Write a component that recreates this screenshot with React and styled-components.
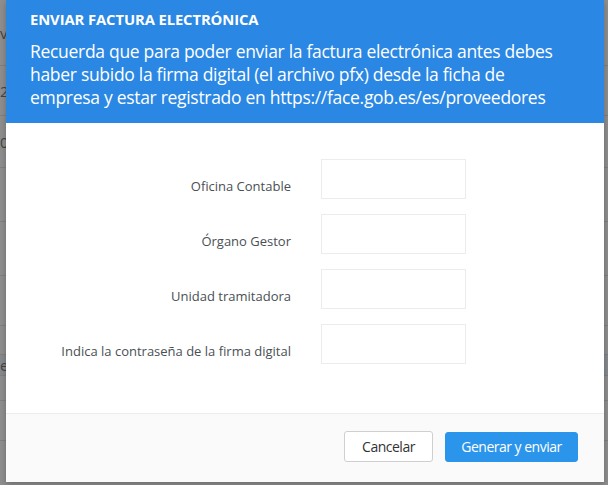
import React from 'react';
import styled, { createGlobalStyle } from 'styled-components';

const GlobalStyle = createGlobalStyle`
    html, body {
        margin: 0;
        padding: 0;
        background: #8e8e8e;
        font-family: "Open Sans", "Liberation Sans", sans-serif;
    }
`;

const Screen = styled.div`
    position: relative;
    width: 608px;
    height: 485px;
    overflow: hidden;
    background: #8e8e8e;
`;

const BackTable = styled.div`
    display: flex;
    flex-direction: column;
`;
const BackRow = styled.div`
    height: ${p => p.h}px;
    border-bottom: 1px solid #7f7f7f;
    background: ${p => p.tint || 'transparent'};
    color: #444;
    font-size: 15px;
    line-height: ${p => p.h}px;
    display: flex;
    justify-content: space-between;
    padding-right: 2px;
    box-sizing: border-box;
`;

const Modal = styled.div`
    position: absolute;
    left: 6px;
    top: 0;
    width: 598px;
    height: 482px;
    background: #fff;
    display: flex;
    flex-direction: column;
    box-shadow: 0 2px 6px rgba(0, 0, 0, 0.25);
`;

const Header = styled.div`
    background: #2a87e4;
    color: #fff;
    padding: 9px 24px 14px 24px;
    height: 123px;
    box-sizing: border-box;
`;
const Title = styled.h4`
    margin: 0 0 11px 0;
    font-size: 14.8px;
    font-weight: 700;
    line-height: 20px;
    letter-spacing: -0.1px;
`;
const Notice = styled.p`
    margin: 0;
    font-size: 17.5px;
    line-height: 23px;
    font-weight: 400;
    letter-spacing: -0.3px;
`;

const Body = styled.div`
    flex: 1;
    padding: 36px 0 0 24px;
    display: grid;
    grid-template-columns: 261px 145px;
    grid-auto-rows: 40px;
    column-gap: 30px;
    row-gap: 15px;
    align-content: start;
`;
const Label = styled.label`
    align-self: end;
    padding-bottom: 4px;
    text-align: right;
    font-size: 13px;
    color: #4a4f55;
    line-height: 18px;
`;
const Input = styled.input`
    box-sizing: border-box;
    width: 145px;
    height: 40px;
    border: 1px solid #ececec;
    outline: none;
    font: inherit;
`;

const Footer = styled.div`
    height: 69px;
    box-sizing: border-box;
    background: #fafafa;
    border-top: 1px solid #ececec;
    display: flex;
    justify-content: flex-end;
    align-items: center;
    gap: 12px;
    padding: 0 26px 3px 0;
`;
const Button = styled.button`
    font-family: "Open Sans", "Liberation Sans", sans-serif;
    font-size: 14px;
    letter-spacing: -0.5px;
    width: ${p => p.primary ? 133 : 89}px;
    height: ${p => p.primary ? 30 : 31}px;
    padding: 0;
    border-radius: 3px;
    border: 1px solid ${p => p.primary ? '#2b95ec' : '#cfcfcf'};
    background: ${p => p.primary ? '#2b95ec' : '#fff'};
    color: ${p => p.primary ? '#fff' : '#333'};
    cursor: pointer;
`;

const fields = [
    'Oficina Contable',
    'Órgano Gestor',
    'Unidad tramitadora',
    'Indica la contraseña de la firma digital',
];

const rows = [
    { h: 66, l: 'v', r: '' },
    { h: 50, l: '2', r: '' },
    { h: 52, l: '0', r: '' },
    { h: 54, l: '', r: '' },
    { h: 54, l: '', r: '' },
    { h: 50, l: '', r: '' },
    { h: 29, l: '', r: '' },
    { h: 21, l: 'e', r: '', tint: '#86898d' },
    { h: 25, l: '', r: '' },
    { h: 40, l: '', r: '' },
];

export default function App() {
    return (
        <>
            <GlobalStyle />
            <Screen>
                <BackTable>
                    {rows.map((r, i) => (
                        <BackRow key={i} h={r.h} tint={r.tint}>
                            <span>{r.l}</span>
                            <span>{r.r}</span>
                        </BackRow>
                    ))}
                </BackTable>
                <Modal>
                    <Header>
                        <Title>ENVIAR FACTURA ELECTRÓNICA</Title>
                        <Notice>
                            Recuerda que para poder enviar la factura electrónica antes debes<br />
                            haber subido la firma digital (el archivo pfx) desde la ficha de<br />
                            empresa y estar registrado en https://face.gob.es/es/proveedores
                        </Notice>
                    </Header>
                    <Body>
                        {fields.map(f => (
                            <React.Fragment key={f}>
                                <Label>{f}</Label>
                                <Input type={f.startsWith('Indica') ? 'password' : 'text'} />
                            </React.Fragment>
                        ))}
                    </Body>
                    <Footer>
                        <Button>Cancelar</Button>
                        <Button primary>Generar y enviar</Button>
                    </Footer>
                </Modal>
            </Screen>
        </>
    );
}
